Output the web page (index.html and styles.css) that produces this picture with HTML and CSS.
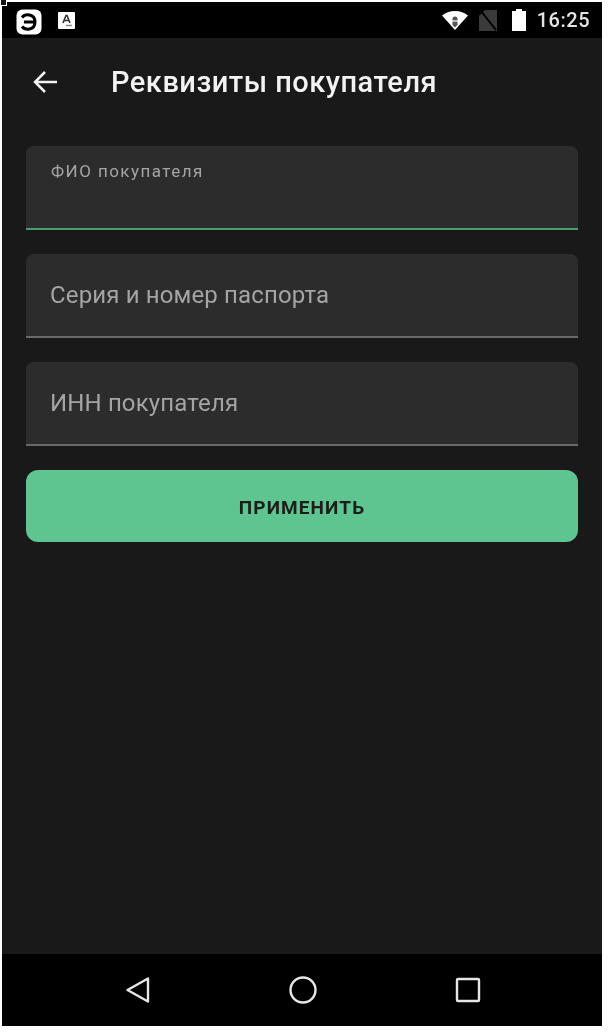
FILE: index.html
```html
<!DOCTYPE html>
<html lang="ru">
<head>
<meta charset="utf-8">
<title>Реквизиты покупателя</title>
<link rel="stylesheet" href="styles.css">
</head>
<body>
<div class="screen">
  <header class="status">
    <div class="status-left">
      <svg class="ic-app" viewBox="0 0 26 26"><rect x=".5" y=".5" width="25" height="25" rx="6" fill="#fff"/><path d="M6 8.500C8 6 11 5.500 13.500 6c3.500 .7 5.500 3.500 5.500 7s-2 6.300-5.500 7c-2.500 .5-5.500 0-7.500-2.500M8 13h10" fill="none" stroke="#000" stroke-width="3"/></svg>
      <svg class="ic-a" viewBox="0 0 17 17"><rect width="17" height="17" rx="1" fill="#fff"/><path d="M5 11 8 3.500h1L12 11M6.200 8.500h4.600" fill="none" stroke="#333" stroke-width="1.600"/><path d="M8 13.500h6" stroke="#888" stroke-width="1.500"/></svg>
    </div>
    <div class="status-right">
      <svg class="ic-wifi" viewBox="0 0 26 19"><path d="M0 4.500C3 1.800 8 0 13 0s10 1.800 13 4.500L13 19z" fill="#fff"/><path d="M13 5.500a2.500 2.500 0 0 1 2.500 2.500v6L13 16.500 10.500 14V8A2.500 2.500 0 0 1 13 5.500z" fill="#555"/><path d="M10 10h6" stroke="#fff" stroke-width="1.200"/></svg>
      <svg class="ic-sim" viewBox="0 0 18 21"><path d="M0 21V6l6-6h12v21z" fill="#3a3a3a"/><path d="M2 1l15 19" stroke="#000" stroke-width="2"/></svg>
      <svg class="ic-bat" viewBox="0 0 14 22"><path d="M4 0h6v2h4v20H0V2h4z" fill="#fff"/></svg>
      <span class="clock">16:25</span>
    </div>
  </header>
  <div class="appbar">
    <svg class="ic-back" viewBox="0 0 24 24"><path d="M24 12H2.500M12 2 2 12l10 10" fill="none" stroke="#f2f2f2" stroke-width="2.500"/></svg>
    <h1 class="title">Реквизиты покупателя</h1>
  </div>
  <main class="form">
    <div class="field field-active"><span class="label-small">ФИО покупателя</span></div>
    <div class="field"><span class="label">Серия и номер паспорта</span></div>
    <div class="field"><span class="label">ИНН покупателя</span></div>
    <button class="apply" type="button">ПРИМЕНИТЬ</button>
  </main>
  <nav class="navbar">
    <svg class="nav-ic" viewBox="0 0 28 28"><path d="M24 2.500V25.500L3.500 14z" fill="none" stroke="#e6e6e6" stroke-width="2.400" stroke-linejoin="round"/></svg>
    <svg class="nav-ic" viewBox="0 0 28 28"><circle cx="14" cy="14" r="12.500" fill="none" stroke="#e6e6e6" stroke-width="2.400"/></svg>
    <svg class="nav-ic" viewBox="0 0 28 28"><rect x="3" y="3" width="22" height="22" rx="1" fill="none" stroke="#e6e6e6" stroke-width="2.400"/></svg>
  </nav>
</div>
<span class="corner"></span>
</body>
</html>
```
FILE: styles.css
```css
* { box-sizing: border-box; }
html, body { margin: 0; padding: 0; background: #fff; }
body { width: 610px; height: 1036px; overflow: hidden; padding: 2px 8px 10px 2px; font-family: Roboto, "Noto Sans", sans-serif; }
.corner { position: absolute; left: 1px; top: 0; width: 5px; height: 5px; background: #111; box-shadow: 1px 1px 0 #fff; }
.screen { width: 600px; height: 1024px; background: #1a191a; display: flex; flex-direction: column; filter: blur(.6px); }
.status { height: 36px; background: #000; display: flex; justify-content: space-between; align-items: center; padding: 0 12px 0 14px; flex: none; }
.status-left, .status-right { display: flex; align-items: center; }
.ic-app { width: 26px; height: 26px; margin-top: 3px; }
.ic-a { width: 17px; height: 17px; margin-left: 16px; }
.ic-wifi { width: 26px; height: 19px; }
.ic-sim { width: 18px; height: 21px; margin-left: 11px; }
.ic-bat { width: 14px; height: 22px; margin-left: 15px; }
.clock { color: #e4e4e4; font-size: 20px; font-weight: 500; margin-left: 11px; letter-spacing: .5px; }
.appbar { height: 88px; display: flex; align-items: center; padding: 0 0 0 31px; flex: none; }
.ic-back { width: 24px; height: 24px; }
.title { margin: 0 0 0 54px; color: #f2f2f2; font-size: 29px; font-weight: 500; line-height: 32px; letter-spacing: .5px; }
.form { flex: 1; padding: 20px 24px 0; display: flex; flex-direction: column; gap: 24px; }
.field { height: 84px; background: #2d2c2d; border-radius: 8px 8px 0 0; border-bottom: 2px solid #6b6a6b; padding: 0 24px; display: flex; align-items: center; }
.field-active { border-bottom-color: #4b9a72; align-items: flex-start; padding: 15px 25px 0; }
.label { color: #a4a4a4; font-size: 24px; line-height: 28px; letter-spacing: .14px; }
.label-small { color: #a4a4a4; font-size: 17px; line-height: 20px; letter-spacing: 1.45px; }
.apply { height: 72px; border: 0; border-radius: 12px; background: #5ec490; color: #1a1f1c; font: 700 19px Roboto, sans-serif; letter-spacing: 1.1px; padding: 2px 0 0; }
.navbar { height: 72px; background: #000; display: flex; justify-content: space-between; padding: 0 120px 0 122px; align-items: center; flex: none; }
.nav-ic { width: 28px; height: 28px; }
```
